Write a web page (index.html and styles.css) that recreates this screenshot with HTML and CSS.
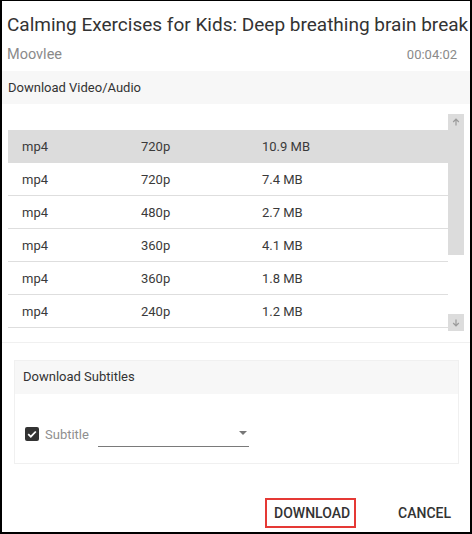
FILE: index.html
```html
<!DOCTYPE html>
<html>
<head>
<meta charset="utf-8">
<link rel="stylesheet" href="styles.css">
</head>
<body>
<div class="dialog">
  <h1 class="title">Calming Exercises for Kids: Deep breathing brain break</h1>
  <div class="meta">
    <span class="channel">Moovlee</span>
    <span class="duration">00:04:02</span>
  </div>

  <section class="video">
    <div class="band">Download Video/Audio</div>
    <div class="scroller">
      <div class="table">
        <div class="thead"></div>
        <div class="row selected"><span class="c1">mp4</span><span class="c2">720p</span><span class="c3">10.9 MB</span></div>
        <div class="row"><span class="c1">mp4</span><span class="c2">720p</span><span class="c3">7.4 MB</span></div>
        <div class="row"><span class="c1">mp4</span><span class="c2">480p</span><span class="c3">2.7 MB</span></div>
        <div class="row"><span class="c1">mp4</span><span class="c2">360p</span><span class="c3">4.1 MB</span></div>
        <div class="row"><span class="c1">mp4</span><span class="c2">360p</span><span class="c3">1.8 MB</span></div>
        <div class="row"><span class="c1">mp4</span><span class="c2">240p</span><span class="c3">1.2 MB</span></div>
      </div>
      <div class="sbar">
        <div class="thumb">
          <svg class="arrow" width="8" height="8" viewBox="0 0 8 8"><path d="M4 7.5V1.2M1.2 4L4 1.2 6.8 4" fill="none" stroke="#9a9a9a" stroke-width="1.2"/></svg>
        </div>
        <div class="track"></div>
        <div class="down">
          <svg class="arrow" width="8" height="8" viewBox="0 0 8 8"><path d="M4 0.5V6.8M1.2 4L4 6.8 6.8 4" fill="none" stroke="#9a9a9a" stroke-width="1.2"/></svg>
        </div>
      </div>
    </div>
  </section>

  <section class="subs">
    <div class="subs-head">Download Subtitles</div>
    <div class="subs-body">
      <span class="check"><svg width="14" height="14" viewBox="0 0 14 14"><path d="M3.2 7.2L5.8 9.7 10.8 4.5" fill="none" stroke="#fff" stroke-width="1.8"/></svg></span>
      <span class="label">Subtitle</span>
      <div class="select"><span class="caret"></span></div>
    </div>
  </section>

  <div class="actions">
    <button class="btn primary">DOWNLOAD</button>
    <button class="btn">CANCEL</button>
  </div>
</div>
</body>
</html>
```

FILE: styles.css
```css
* { box-sizing: border-box; }
html, body { margin: 0; padding: 0; background: #fff; }
body { font-family: Roboto, "Liberation Sans", sans-serif; color: #333; }

.dialog {
  width: 472px;
  height: 534px;
  border: 2px solid #000;
  border-top-width: 1px;
  overflow: hidden;
}

.title {
  margin: 12px 0 0 0;
  padding-left: 5px;
  font-size: 19px;
  font-weight: 400;
  line-height: 24px;
  color: #333;
  white-space: nowrap;
}

.meta {
  display: flex;
  justify-content: space-between;
  margin-top: 8px;
  padding: 0 13px 0 5px;
  line-height: 20px;
  font-size: 14px;
  color: #8a8a8a;
}
.channel { font-size: 14.5px; }
.duration { font-size: 13px; }

.video {
  margin-top: 6px;
  border-bottom: 1px solid #f0f0f0;
  padding-bottom: 8px;
}
.band {
  height: 33px;
  line-height: 33px;
  background: #f7f7f7;
  padding-left: 6px;
  font-size: 13px;
  color: #333;
}

.scroller {
  display: flex;
  margin: 10px 0 0 6px;
  height: 220px;
  width: 456px;
}
.table {
  width: 440px;
  overflow: hidden;
}
.thead { height: 16px; }
.row {
  display: flex;
  height: 33px;
  align-items: center;
  border-bottom: 1px solid #dedede;
  font-size: 13px;
  color: #3a3a3a;
  padding-left: 14px;
}
.row.selected { background: #dcdcdc; border-bottom-color: #dcdcdc; }
.c1 { width: 119px; }
.c2 { width: 121px; }

.sbar {
  width: 16px;
  display: flex;
  flex-direction: column;
}
.thumb {
  height: 141px;
  background: #dcdcdc;
  display: flex;
  justify-content: center;
  padding-top: 4px;
}
.track { flex: 1; }
.down {
  height: 17px;
  margin-bottom: 3px;
  background: #dcdcdc;
  display: flex;
  justify-content: center;
  align-items: center;
}
.arrow { display: block; }

.subs {
  margin: 17px 11px 0 12px;
  border: 1px solid #f0f0f0;
}
.subs-head {
  height: 33px;
  line-height: 32px;
  background: #f7f7f7;
  padding-left: 8px;
  font-size: 13px;
  color: #333;
}
.subs-body {
  display: flex;
  align-items: center;
  padding: 27px 10px 16px 10px;
  height: 69px;
}
.check {
  width: 14px;
  height: 14px;
  border-radius: 2px;
  background: #333;
  display: flex;
}
.label {
  margin-left: 6px;
  font-size: 13px;
  color: #8f8f8f;
}
.select {
  margin-left: 9px;
  width: 151px;
  height: 26px;
  border-bottom: 1px solid #7a7a7a;
  display: flex;
  justify-content: flex-end;
  align-items: center;
  padding-right: 2px;
  padding-bottom: 2px;
}
.caret {
  width: 0;
  height: 0;
  border-left: 4px solid transparent;
  border-right: 4px solid transparent;
  border-top: 4px solid #777;
}

.actions {
  display: flex;
  justify-content: flex-end;
  align-items: center;
  margin-top: 34px;
  padding-right: 19px;
  gap: 42px;
}
.btn {
  font-family: Roboto, "Liberation Sans", sans-serif;
  font-size: 14px;
  font-weight: 500;
  color: #333;
  background: none;
  border: none;
  padding: 0;
  height: 30px;
  line-height: 26px;
  cursor: pointer;
}
.btn.primary {
  border: 2px solid #e53935;
  padding: 0 4px 0 7px;
  width: 91px;
  text-align: left;
}
```
